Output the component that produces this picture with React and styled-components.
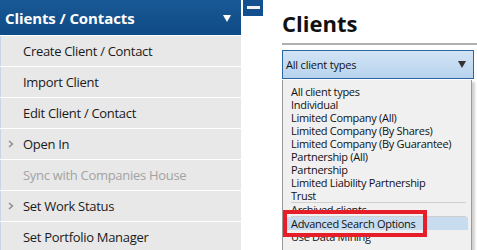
import React from 'react';
import styled, { createGlobalStyle } from 'styled-components';

const GlobalStyle = createGlobalStyle`
  html, body {
    margin: 0;
    padding: 0;
    background: #ffffff;
  }
  body {
    width: 477px;
    height: 250px;
    overflow: hidden;
    font-family: "Open Sans", "Noto Sans", sans-serif;
    color: #1a1a1a;
  }
`;

const Page = styled.div`
  display: flex;
  align-items: flex-start;
  width: 477px;
  height: 250px;
  overflow: hidden;
`;

const Sidebar = styled.div`
  width: 241px;
  flex-shrink: 0;
`;

const SideHeader = styled.div`
  height: 35px;
  display: flex;
  align-items: center;
  justify-content: space-between;
  padding: 0 10px 0 5px;
  box-sizing: border-box;
  background: linear-gradient(#195995, #0e4a86);
  color: #ffffff;
  font-weight: 700;
  font-size: 15px;
  letter-spacing: -0.1px;
`;

const HeaderArrow = styled.span`
  width: 0;
  height: 0;
  border-left: 4px solid transparent;
  border-right: 4px solid transparent;
  border-top: 7px solid #ffffff;
  margin-top: 1px;
`;

const MenuItem = styled.div`
  position: relative;
  height: 30px;
  margin-top: 1px;
  display: flex;
  align-items: center;
  padding-left: 22px;
  background: #e8e8e8;
  border-left: 1px solid #c8d5e5;
  font-size: 13px;
  letter-spacing: -0.3px;
  color: ${p => (p.disabled ? '#a3a3a3' : '#1a1a1a')};
  &:first-of-type {
    margin-top: 0;
  }
`;

const Chevron = styled.svg`
  position: absolute;
  left: 7px;
  top: 11px;
`;

const CollapseButton = styled.div`
  width: 20px;
  height: 16px;
  margin-left: 2px;
  flex-shrink: 0;
  background: #12508f;
  display: flex;
  align-items: center;
  justify-content: center;
  &::after {
    content: '';
    width: 13px;
    height: 3px;
    background: #f2f2f2;
    margin-top: -1px;
  }
`;

const Main = styled.div`
  position: relative;
  flex: 1;
  margin-left: 19px;
  padding-top: 9px;
`;

const Title = styled.h1`
  margin: 0;
  font-size: 22px;
  line-height: 28px;
  font-weight: 700;
  color: #111111;
  padding-bottom: 6px;
  border-bottom: 2px solid #b0b0b0;
`;

const Select = styled.div`
  margin-top: 5px;
  width: 192px;
  height: 29px;
  box-sizing: border-box;
  border: 1px solid #2a65a4;
  background: linear-gradient(#d2e4f5, #b8d3ee);
  display: flex;
  align-items: center;
  justify-content: space-between;
  padding: 0 7px 0 3px;
  font-size: 11px;
  letter-spacing: -0.2px;
  color: #111111;
`;

const SelectArrow = styled.span`
  width: 0;
  height: 0;
  border-left: 4px solid transparent;
  border-right: 4px solid transparent;
  border-top: 7px solid #333333;
`;

const Dropdown = styled.div`
  position: absolute;
  left: 0;
  top: 80px;
  width: 190px;
  height: 180px;
  box-sizing: border-box;
  background: #f0f0f0;
  border: 1px solid #9a9a9a;
  border-top: none;
  box-shadow: 3px 2px 2px rgba(0, 0, 0, 0.18);
  padding: 5px 3px 0 2px;
`;

const Option = styled.div`
  height: 13px;
  line-height: 13px;
  padding-left: 6px;
  font-size: 11px;
  letter-spacing: -0.3px;
  color: #111111;
  white-space: nowrap;
  background: ${p => (p.active ? '#c8dcef' : 'transparent')};
`;

const Divider = styled.div`
  height: 1px;
  margin: 0 2px 0 6px;
  background: #cfcfcf;
`;

const Callout = styled.div`
  position: absolute;
  left: 1px;
  top: 210px;
  width: 144px;
  height: 27px;
  box-sizing: border-box;
  border: 4px solid #e51e2a;
`;

const menu = [
  { label: 'Create Client / Contact' },
  { label: 'Import Client' },
  { label: 'Edit Client / Contact' },
  { label: 'Open In', sub: true },
  { label: 'Sync with Companies House', disabled: true },
  { label: 'Set Work Status', sub: true },
  { label: 'Set Portfolio Manager' },
];

const types = [
  'All client types',
  'Individual',
  'Limited Company (All)',
  'Limited Company (By Shares)',
  'Limited Company (By Guarantee)',
  'Partnership (All)',
  'Partnership',
  'Limited Liability Partnership',
  'Trust',
];

export default function App() {
  return (
    <Page>
      <GlobalStyle />
      <Sidebar>
        <SideHeader>
          <span>Clients / Contacts</span>
          <HeaderArrow />
        </SideHeader>
        {menu.map(item => (
          <MenuItem key={item.label} disabled={item.disabled}>
            {item.sub && (
              <Chevron width="6" height="8" viewBox="0 0 6 8">
                <path d="M1 1 L4.5 4 L1 7" fill="none" stroke="#8a8a8a" strokeWidth="1.4" />
              </Chevron>
            )}
            {item.label}
          </MenuItem>
        ))}
      </Sidebar>
      <CollapseButton />
      <Main>
        <Title>Clients</Title>
        <Select>
          <span>All client types</span>
          <SelectArrow />
        </Select>
        <Dropdown>
          {types.map(t => (
            <Option key={t}>{t}</Option>
          ))}
          <Divider />
          <Option>Archived clients</Option>
          <Divider />
          <Option active>Advanced Search Options</Option>
          <Option>Use Data Mining</Option>
        </Dropdown>
        <Callout />
      </Main>
    </Page>
  );
}
